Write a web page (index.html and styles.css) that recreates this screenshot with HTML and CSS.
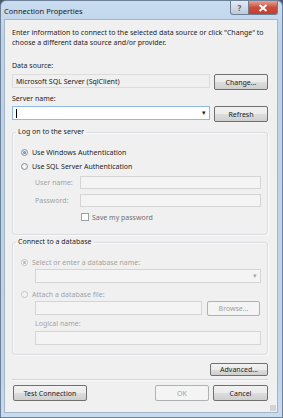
FILE: index.html
```html
<!doctype html>
<html lang="en">
  <head>
    <meta charset="UTF-8" />
    <title>Connection Properties</title>
    <link rel="stylesheet" href="styles.css">
  </head>
  <body>
    <div class="window">
      <div class="titlebar">
        <span class="title">Connection Properties</span>
        <div class="caption-buttons">
          <span class="cap-btn help">?</span>
          <span class="cap-btn close">
            <svg width="10" height="8" viewBox="0 0 10 8">
              <path d="M1.5 1 L8.5 7 M8.5 1 L1.5 7" stroke="#fff" stroke-width="2" />
            </svg>
          </span>
        </div>
      </div>
      <div class="client">
        <p class="intro">Enter information to connect to the selected data source or click "Change" to choose a different data source and/or provider.</p>

        <div class="label">Data source:</div>
        <div class="row">
          <div class="textbox readonly">Microsoft SQL Server (SqlClient)</div>
          <button class="btn">Change...</button>
        </div>

        <div class="label label-server">Server name:</div>
        <div class="row row-server">
          <div class="textbox combo focused">
            <span class="caret"></span>
            <span class="arrow">&#9662;</span>
          </div>
          <button class="btn">Refresh</button>
        </div>

        <fieldset class="group logon">
          <legend>Log on to the server</legend>
          <div class="radio-row first">
            <span class="radio checked"></span>Use Windows Authentication
          </div>
          <div class="radio-row">
            <span class="radio"></span>Use SQL Server Authentication
          </div>
          <div class="field-row">
            <span class="field-label disabled">User name:</span>
            <div class="textbox disabled-box"></div>
          </div>
          <div class="field-row">
            <span class="field-label disabled">Password:</span>
            <div class="textbox disabled-box"></div>
          </div>
          <div class="check-row">
            <span class="checkbox"></span>Save my password
          </div>
        </fieldset>

        <fieldset class="group database">
          <legend>Connect to a database</legend>
          <div class="radio-row first disabled">
            <span class="radio checked grey"></span>Select or enter a database name:
          </div>
          <div class="indent db-name">
            <div class="textbox disabled-box combo">
              <span class="arrow grey">&#9662;</span>
            </div>
          </div>
          <div class="radio-row attach disabled">
            <span class="radio grey"></span>Attach a database file:
          </div>
          <div class="indent row file-row">
            <div class="textbox disabled-box"></div>
            <button class="btn disabled-btn browse">Browse...</button>
          </div>
          <div class="indent">
            <div class="sublabel disabled">Logical name:</div>
            <div class="textbox disabled-box"></div>
          </div>
        </fieldset>

        <div class="advanced-row">
          <button class="btn advanced">Advanced...</button>
        </div>

        <div class="footer">
          <button class="btn test">Test Connection</button>
          <div class="footer-right">
            <button class="btn disabled-btn ok">OK</button>
            <button class="btn cancel">Cancel</button>
          </div>
        </div>
        <span class="grip"></span>
      </div>
    </div>
  </body>
</html>
```

FILE: styles.css
```css
html,
body {
  margin: 0;
  padding: 0;
  background-color: #4a5a6c;
  font-family: "Noto Sans", "Open Sans", sans-serif;
  font-size: 7px;
  color: #1e1e1e;
}

.window {
  width: 283px;
  height: 418px;
  box-sizing: border-box;
  border: 1px solid #6d8299;
  border-radius: 6px 6px 0 0;
  background: linear-gradient(to bottom, #c9dcf0 0, #bcd2ea 40px, #bfd4ec 380px, #cbdcef 418px);
  padding: 0 4px 4px 3px;
  display: flex;
  flex-direction: column;
}

.titlebar {
  height: 18px;
  flex: none;
  display: flex;
  justify-content: space-between;
  align-items: flex-start;
}

.title {
  font-size: 7.5px;
  color: #1a1a1a;
  padding-top: 5px;
  padding-left: 0;
}

.caption-buttons {
  display: flex;
  margin-right: 0;
}

.cap-btn {
  height: 14px;
  display: flex;
  align-items: center;
  justify-content: center;
  border: 1px solid #6f7f93;
  border-top: none;
  box-sizing: border-box;
}

.help {
  width: 19px;
  border-radius: 0 0 0 3px;
  background: linear-gradient(to bottom, #e4ecf5, #bccadb);
  color: #56626f;
  font-size: 8px;
  font-weight: bold;
}

.close {
  width: 29px;
  border-left: none;
  border-radius: 0 0 3px 0;
  background: linear-gradient(to bottom, #e6a497, #cb4c3c 50%, #c43f30);
}

.client {
  flex: 1;
  position: relative;
  background-color: #f0f0f0;
  border: 1px solid #a3b5c9;
  padding: 0 9px 0 7px;
  display: flex;
  flex-direction: column;
}

.intro {
  margin: 8px 0 0 0;
  line-height: 10px;
}

.label {
  margin-top: 13px;
  line-height: 10px;
}

.label-server {
  margin-top: 4px;
}

.row {
  display: flex;
  align-items: flex-start;
  gap: 4px;
  margin-top: 3px;
}

.row-server {
  margin-top: 2px;
}

.row .textbox {
  flex: 1;
}

.textbox {
  height: 14px;
  box-sizing: border-box;
  border: 1px solid #d2d6db;
  background-color: #fff;
  display: flex;
  align-items: center;
  padding-left: 3px;
  position: relative;
}

.textbox.readonly {
  background-color: #f0f0f0;
  border-color: #dcdcdc;
  color: #222;
}

.textbox.focused {
  border-color: #8cbbe9;
}

.caret {
  width: 1px;
  height: 9px;
  background-color: #000;
}

.arrow {
  position: absolute;
  right: 3px;
  top: 1px;
  font-size: 7px;
  color: #222;
}

.arrow.grey {
  color: #a8a8a8;
}

.btn {
  width: 54px;
  height: 16px;
  box-sizing: border-box;
  border: 1px solid #707070;
  border-radius: 2px;
  background: linear-gradient(to bottom, #f2f2f2 0, #ebebeb 50%, #dddddd 51%, #cfcfcf 100%);
  font-family: inherit;
  font-size: 7px;
  color: #1e1e1e;
  padding: 0;
  margin: 0;
}

.disabled-btn {
  border-color: #adb2b5;
  background: #f4f4f4;
  color: #a0a0a0;
}

.group {
  margin: 5px 0 0 0;
  padding: 0 6px 0 8px;
  min-width: 0;
  box-sizing: border-box;
  border: 1px solid #d9dde1;
  border-radius: 3px;
  box-shadow: inset 1px 1px 0 #fafafa, 1px 1px 0 #fafafa;
}

.group legend {
  padding: 0 2px;
  margin-left: -5px;
  line-height: 10px;
}

.logon {
  height: 108px;
}

.database {
  height: 118px;
  margin-top: 2px;
}

.radio-row {
  display: flex;
  align-items: center;
  height: 10px;
  margin-top: 4px;
}

.radio-row.first {
  margin-top: 10px;
}

.radio {
  width: 5px;
  height: 5px;
  border-radius: 50%;
  border: 1px solid #8a929b;
  background: radial-gradient(circle, #fff 0, #dfe2e5 100%);
  margin-right: 4px;
  display: flex;
  align-items: center;
  justify-content: center;
}

.radio.checked::after {
  content: "";
  width: 3px;
  height: 3px;
  border-radius: 50%;
  background: radial-gradient(circle at 40% 40%, #86c6f2, #1b5a98);
}

.radio.grey {
  border-color: #c4c4c4;
  background: #f4f4f4;
}

.radio.checked.grey::after {
  background: #b8b8b8;
}

.disabled {
  color: #a3a3a3;
}

.field-row {
  display: flex;
  align-items: center;
  margin-top: 5px;
  margin-left: 14px;
}

.field-label {
  width: 45px;
}

.field-row .textbox {
  flex: 1;
}

.disabled-box {
  background-color: #f4f4f4;
  border-color: #d5d5d5;
  height: 13px;
}

.check-row {
  display: flex;
  align-items: center;
  margin-left: 60px;
  margin-top: 5px;
  height: 10px;
  color: #6f6f6f;
}

.checkbox {
  width: 6px;
  height: 6px;
  border: 1px solid #9aa0a6;
  background-color: #fff;
  margin-right: 3px;
}

.indent {
  margin-left: 14px;
}

.db-name {
  margin-top: 2px;
}

.db-name .textbox {
  height: 14px;
}

.radio-row.attach {
  margin-top: 6px;
}

.file-row {
  margin-top: 2px;
  gap: 5px;
}

.file-row .textbox {
  height: 14px;
}

.browse {
  width: 53px;
  height: 15px;
  margin-right: 1px;
}

.sublabel {
  margin-top: 3px;
  margin-bottom: 2px;
  line-height: 10px;
}

.indent > .textbox {
  height: 14px;
}

.advanced-row {
  display: flex;
  justify-content: flex-end;
  margin-top: 8px;
}

.advanced {
  width: 58px;
  height: 13px;
}

.footer {
  margin-top: 3px;
  border-top: 1px solid #d5d5d5;
  box-shadow: 0 1px 0 #fafafa inset;
  padding-top: 5px;
  display: flex;
  justify-content: space-between;
}

.test {
  width: 74px;
  margin-left: 1px;
}

.footer-right {
  display: flex;
  gap: 4px;
}

.cancel {
  width: 55px;
}

.grip {
  position: absolute;
  right: 1px;
  bottom: 1px;
  width: 6px;
  height: 6px;
  background: radial-gradient(circle, #b0b0b0 0.6px, transparent 0.8px) 0 0 / 2px 2px;
}
```
